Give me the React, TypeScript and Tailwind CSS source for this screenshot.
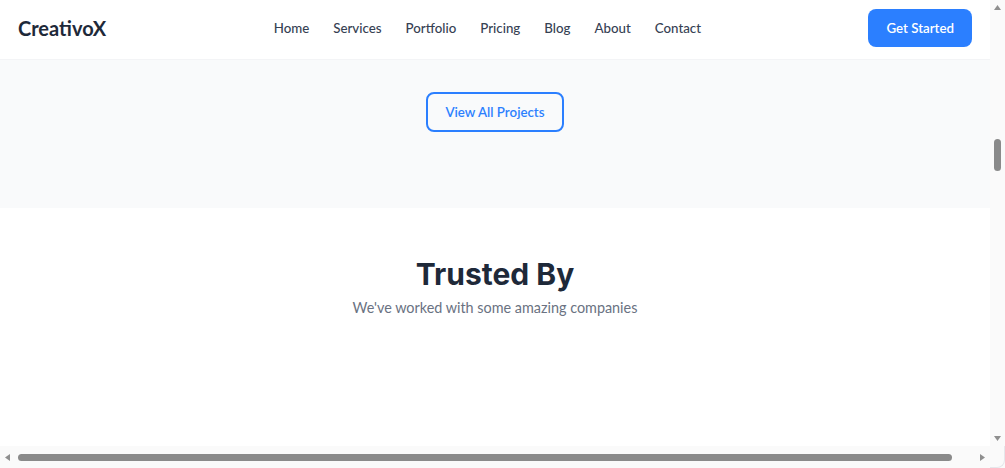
const links = ['Home', 'Services', 'Portfolio', 'Pricing', 'Blog', 'About', 'Contact'];

function Arrow({ dir }: { dir: 'up' | 'down' | 'left' | 'right' }) {
  const points = {
    up: '0,5 3.5,0 7,5',
    down: '0,0 7,0 3.5,5',
    left: '5,0 5,7 0,3.5',
    right: '0,0 5,3.5 0,7',
  }[dir];
  const size = dir === 'up' || dir === 'down' ? { w: 7, h: 5 } : { w: 5, h: 7 };
  return (
    <svg width={size.w} height={size.h} viewBox={`0 0 ${size.w} ${size.h}`}>
      <polygon points={points} fill="#8f8f8f" />
    </svg>
  );
}

export default function App() {
  return (
    <div className="flex h-screen w-screen flex-col overflow-hidden bg-white font-['Lato','Noto_Sans',sans-serif] text-gray-800">
      <div className="flex min-h-0 flex-1">
        <div className="flex min-w-0 flex-1 flex-col">
          <header className="flex items-center justify-between border-b border-gray-100 bg-white px-[18px] pt-[9px] pb-[12px]">
            <span className="text-xl font-bold text-gray-800">CreativoX</span>
            <nav className="flex items-center gap-[24px] pt-[2px]">
              {links.map((l) => (
                <a key={l} href="#" className="text-[13.3px] font-medium text-gray-700">
                  {l}
                </a>
              ))}
            </nav>
            <a href="#" className="rounded-lg bg-blue-500 px-[18px] py-2 text-[13.3px] leading-[22px] font-semibold text-white">
              Get Started
            </a>
          </header>

          {/* end of the portfolio section */}
          <section className="flex justify-center bg-gray-50 pt-8 pb-[76px]">
            <a href="#" className="rounded-lg border-2 border-blue-500 px-[17px] py-2 text-[13.3px] leading-5 font-semibold text-blue-500">
              View All Projects
            </a>
          </section>

          <section className="flex-1 bg-white pt-12 text-center">
            <h2 className="font-['Inter',sans-serif] text-3xl font-bold text-gray-800">Trusted By</h2>
            <p className="mt-1 text-[14.4px] leading-6 text-gray-500">We've worked with some amazing companies</p>
          </section>
        </div>

        {/* vertical scrollbar */}
        <div className="flex w-[15px] flex-col items-center bg-[#fafafa]">
          <div className="flex h-[15px] items-center justify-center">
            <Arrow dir="up" />
          </div>
          <div className="flex-1">
            <div className="mt-[124px] h-[32px] w-[7px] rounded-full bg-[#8a8a8a]" />
          </div>
          <div className="flex h-[15px] items-center justify-center">
            <Arrow dir="down" />
          </div>
        </div>
      </div>

      {/* horizontal scrollbar */}
      <div className="flex h-[22px] items-center bg-[#fafafa]">
        <div className="flex w-[15px] items-center justify-center">
          <Arrow dir="left" />
        </div>
        <div className="flex-1 pl-[3px] pr-[23px]">
          <div className="h-[7px] rounded-full bg-[#8a8a8a]" />
        </div>
        <div className="flex w-[15px] items-center justify-center">
          <Arrow dir="right" />
        </div>
        <div className="h-full w-[15px] rounded-br-lg border-r border-b border-gray-200" />
      </div>
    </div>
  );
}
